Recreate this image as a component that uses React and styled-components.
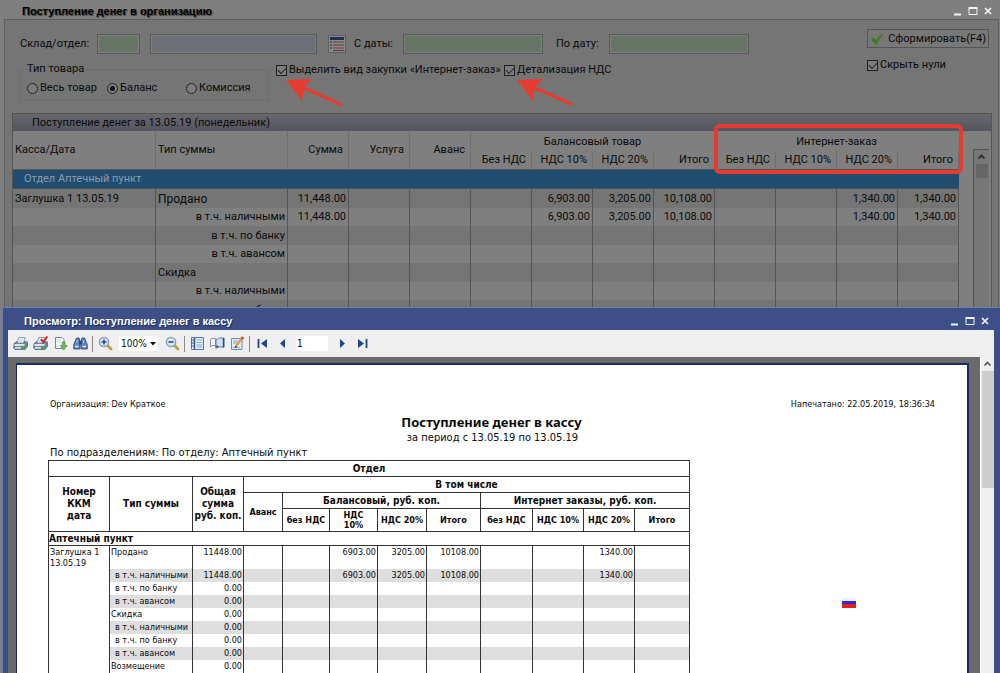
import React from "react";
import styled, { createGlobalStyle, css } from "styled-components";

const Global = createGlobalStyle`
  * { box-sizing: border-box; }
  html, body, #root { height: 100%; }
  body { margin: 0; background: #7f7f7f; font: 11px/14px "DejaVu Sans Condensed", "Noto Sans", sans-serif; color: #0a0a0a; }
  input, button, select { font: inherit; color: inherit; }
`;

const Desktop = styled.main`
  display: flex;
  flex-direction: column;
  height: 100vh;
  overflow: hidden;
`;

/* ---------- main form window ---------- */

const FormWindow = styled.section`
  display: flex;
  flex-direction: column;
  flex: 0 0 307px;
  min-height: 0;
  overflow: hidden;
  background: #7f7f7f;
  font-family: Roboto, "Noto Sans", sans-serif;
`;

const TitleBar = styled.header`
  display: flex;
  align-items: center;
  justify-content: space-between;
  flex: none;
  height: ${(p) => (p.$front ? 22 : 19)}px;
  padding: ${(p) => (p.$front ? "4px 3px 0 16px" : "3px 6px 0 22px")};
  color: ${(p) => (p.$front ? "#fff" : "#000")};
`;

const WindowTitle = styled.h1`
  margin: 0;
  font: bold 11px/14px "Liberation Sans", Arial, sans-serif;
  text-shadow: 1px 1px 1px ${(p) => (p.$front ? "#1d2c5c" : "#3a3a3a")};
`;

const Controls = styled.div`
  display: flex;
  gap: 3px;
`;

const ControlButton = styled.button`
  display: flex;
  width: 12px;
  height: 12px;
  padding: 0;
  border: 0;
  background: none;
  color: #f4f4f4;
`;

const FormBody = styled.div`
  display: flex;
  flex-direction: column;
  flex: 1;
  min-height: 0;
  margin: 0 1px 0 4px;
  border: 1px solid #5e5e5e;
  border-bottom: 0;
  background: #757575;
`;

const FormArea = styled.form`
  display: flex;
  justify-content: space-between;
  flex: none;
  height: 93px;
  padding: 9px 9px 0 15px;
`;

const FormMain = styled.div`
  display: flex;
  flex-direction: column;
`;

const FieldRow = styled.div`
  display: flex;
  align-items: center;
  height: 20px;
  margin-top: 5px;
`;

const FieldLabel = styled.label`
  width: ${(p) => p.$w}px;
  white-space: nowrap;
`;

const Field = styled.input`
  width: ${(p) => p.$w}px;
  height: 20px;
  margin-right: ${(p) => p.$gap}px;
  padding: 0 3px;
  border: 1px solid #5a5c5a;
  outline: 1px solid #7e7e7e;
  outline-offset: -2px;
  border-radius: 0;
  background: ${(p) => (p.$plain ? "#6e7077" : "#667566")};
`;

const ListButton = styled.button`
  display: flex;
  width: 18px;
  height: 18px;
  margin-right: 8px;
  padding: 1px;
  border: 1px solid #5e5e5e;
  background: #8a8a8a;
`;

const OptionRow = styled.div`
  display: flex;
  gap: 7px;
`;

const GroupBox = styled.fieldset`
  display: flex;
  width: 249px;
  height: 39px;
  margin: 8px 0 0;
  padding: 5px 5px 0 6px;
  border: 1px solid #6d6d6d;
  legend { padding: 0 2px 0 0; }
`;

const Check = styled.label`
  position: relative;
  display: flex;
  align-items: center;
  gap: 2px;
  height: 14px;
  white-space: nowrap;
  width: ${(p) => (p.$w ? p.$w + "px" : "auto")};
`;

const Box = styled.input`
  appearance: none;
  flex: none;
  display: grid;
  place-items: center;
  width: 11px;
  height: 11px;
  margin: 0;
  border: 1px solid #222;
  border-radius: ${(p) => (p.type === "radio" ? "50%" : 0)};
  background: #7d7d7d;
  &:checked::after {
    content: "";
    ${(p) =>
      p.type === "radio"
        ? css`width: 5px; height: 5px; border-radius: 50%; background: #111;`
        : css`width: 7px; height: 4px; margin-top: -2px; border: solid #222; border-width: 0 0 1px 1px; transform: rotate(-45deg);`}
  }
`;

const CheckRow = styled.div`
  display: flex;
  gap: 9px;
  padding-top: 9px;
`;

const Arrow = styled.svg`
  position: absolute;
  z-index: 2;
  left: ${(p) => p.$left}px;
  top: 16px;
`;

const FormSide = styled.div`
  display: flex;
  flex-direction: column;
  gap: 10px;
  width: 122px;
`;

const SubmitButton = styled.button`
  display: flex;
  align-items: center;
  gap: 4px;
  height: 19px;
  padding: 0 2px;
  border: 1px solid #555;
  background: #787878;
  white-space: nowrap;
`;

const GridPanel = styled.section`
  display: flex;
  flex-direction: column;
  flex: 1;
  min-height: 0;
  overflow: hidden;
  margin: 0 6px 0 7px;
  border: 1px solid #555;
  border-bottom: 0;
  background: #7f7f7f;
`;

const GridTitle = styled.h2`
  flex: none;
  height: 17px;
  margin: 0;
  padding: 2px 19px;
  font: inherit;
  background: linear-gradient(#67676c, #55555f);
`;

const GridBody = styled.div`
  display: flex;
  flex: 1;
  min-height: 0;
`;

const GridTable = styled.table`
  flex: 1;
  align-self: flex-start;
  width: 0;
  table-layout: fixed;
  border-collapse: separate;
  border-spacing: 0;
  th { padding: 0; font-weight: normal; }
`;

const HeadCell = styled.th`
  position: relative;
  height: ${(p) => (p.$group ? 20 : 19)}px;
  && { padding: ${(p) => (p.$group ? "2px 0 0" : "0 5px 0 2px")}; }
  text-align: ${(p) => p.$align || "right"};
  border-right: 1px solid ${(p) => (p.$group ? "transparent" : "#6e6e6e")};
  border-bottom: ${(p) => (p.$group ? 0 : "1px solid #555")};
`;

const Highlight = styled.span`
  position: absolute;
  z-index: 3;
  top: -7px;
  left: -1px;
  right: -5px;
  height: 50px;
  border: 4px solid #e63c30;
  border-radius: 6px;
`;

const BandCell = styled.td`
  height: 19px;
  padding: 0 11px;
  background: #204c70;
  color: #8b9dac;
  border-bottom: 1px solid #4c5358;
`;

const GridRow = styled.tr`
  height: 18px;
  &:nth-child(even) { height: 19px; background: #757575; }
`;

const GridCell = styled.td`
  padding: 0 2px;
  line-height: 14px;
  font-size: ${(p) => (p.$big ? 12 : 11)}px;
  text-align: ${(p) => p.$align || "right"};
  border-right: 1px solid #555;
  white-space: nowrap;
`;

const ScrollTrack = styled.div`
  flex: none;
  display: flex;
  flex-direction: column;
  align-items: center;
  gap: 2px;
  width: ${(p) => (p.$front ? 14 : 16)}px;
  margin: ${(p) => (p.$front ? 0 : "18px 2px 0 14px")};
  border-left: 1px solid ${(p) => (p.$front ? "#fff" : "#505050")};
  border-top: ${(p) => (p.$front ? 0 : "1px solid #505050")};
  background: ${(p) => (p.$front ? "#efefef" : "#777")};
`;

const ScrollArrow = styled.button`
  display: grid;
  place-items: center;
  width: 100%;
  height: 12px;
  padding: 2px 0 0;
  border: 0;
  background: none;
  color: ${(p) => (p.$front ? "#555" : "#222")};
`;

const Thumb = styled.div`
  width: 12px;
  height: ${(p) => p.$h}px;
  background: ${(p) => (p.$front ? "#cdcdcd" : "#666")};
`;

/* ---------- print preview window ---------- */

const PreviewWindow = styled.section`
  display: flex;
  flex-direction: column;
  flex: 1;
  min-height: 0;
  margin-left: 2px;
  padding: 0 6px 0 5px;
  border: 1px solid #6a7cb0;
  border-width: 1px 0 0 1px;
  background: #3c4f87;
`;

const Toolbar = styled.div`
  display: flex;
  align-items: center;
  flex: none;
  height: 27px;
  padding-left: 2px;
  background: #efefef;
`;

const ToolButton = styled.button`
  display: grid;
  place-items: center;
  width: 20px;
  height: 20px;
  padding: 0;
  border: 0;
  background: none;
`;

const Separator = styled.span`
  width: 1px;
  height: 16px;
  margin: 0 2px;
  background: #8a8a8a;
`;

const ZoomBox = styled.label`
  position: relative;
  display: flex;
  align-items: center;
  width: 39px;
  height: 15px;
  margin: 0 4px;
  background: #fff;
  svg { position: absolute; right: 2px; top: 6px; pointer-events: none; }
`;

const ZoomSelect = styled.select`
  appearance: none;
  width: 100%;
  height: 15px;
  padding: 0 0 0 2px;
  border: 0;
  background: none;
  font-size: 10px;
  line-height: 15px;
`;

const PageInput = styled.input`
  width: 32px;
  height: 15px;
  margin: 0 4px;
  padding: 0 1px;
  border: 0;
  background: #fff;
  font-size: 10px;
`;

const Viewer = styled.div`
  display: flex;
  flex: 1;
  min-height: 0;
`;

const Canvas = styled.div`
  flex: 1;
  min-width: 0;
  overflow: hidden;
  padding: 6px 11px 0 8px;
  background: #6a6a6a;
`;

const Page = styled.article`
  height: 100%;
  padding: 32px 32px 0 31px;
  border: 2px solid #152c66;
  border-left-width: 1px;
  border-bottom: 0;
  background: #fff;
  overflow: hidden;
`;

const PageHead = styled.div`
  display: flex;
  justify-content: space-between;
  padding-left: 2px;
  font-size: 9px;
  line-height: 14px;
`;

const ReportTitle = styled.h2`
  margin: 3px 0 0;
  text-align: center;
  font-family: "Noto Sans", sans-serif;
  font-size: 13px;
  line-height: 16px;
`;

const ReportLine = styled.p`
  margin: 0;
  padding-left: 2px;
  font-size: 11px;
  line-height: ${(p) => (p.$center ? 16 : 14)}px;
  text-align: ${(p) => (p.$center ? "center" : "left")};
`;

const ReportArea = styled.div`
  display: flex;
  justify-content: space-between;
`;

const ReportTable = styled.table`
  width: 641px;
  table-layout: fixed;
  border-collapse: collapse;
  font-size: 9px;
  line-height: 11px;
`;

const ReportHead = styled.th`
  height: ${(p) => p.$h || 16}px;
  padding: 0;
  border: 1px solid #333;
  font-size: ${(p) => (p.$small ? 9 : 10)}px;
  line-height: ${(p) => (p.$small ? 10 : 12)}px;
  text-align: ${(p) => p.$align || "center"};
`;

const ReportCell = styled.td`
  height: ${(p) => (p.$tall ? 23 : 13)}px;
  padding: 1px 1px 0 ${(p) => (p.$indent ? 5 : 1)}px;
  vertical-align: top;
  border: solid #333;
  border-width: 0 1px;
  text-align: ${(p) => p.$align || "right"};
  white-space: nowrap;
  background: ${(p) => (p.$shade ? "#dedede" : "#fff")};
`;

const Flag = styled.svg`
  flex: none;
  margin: 138px 79px 0 0;
`;

/* ---------- drawings ---------- */

const MinIcon = () => <svg width="12" height="12"><path d="M2 9.500h7" stroke="currentColor" strokeWidth="2" /></svg>;
const MaxIcon = () => <svg width="12" height="12"><path d="M2 3.500h8v6h-8z" fill="none" stroke="currentColor" /><path d="M1.500 3h9" stroke="currentColor" strokeWidth="2" /></svg>;
const CloseIcon = () => <svg width="12" height="12"><path d="M3 3l6 6M9 3l-6 6" stroke="currentColor" strokeWidth="1.700" /></svg>;
const UpIcon = () => <svg width="9" height="6"><path d="M1.500 4.500l3-3 3 3" fill="none" stroke="currentColor" strokeWidth="1.600" /></svg>;

const WindowControls = () => (
  <Controls>
    <ControlButton aria-label="Свернуть"><MinIcon /></ControlButton>
    <ControlButton aria-label="Развернуть"><MaxIcon /></ControlButton>
    <ControlButton aria-label="Закрыть"><CloseIcon /></ControlButton>
  </Controls>
);

const RedArrow = ({ left }) => (
  <Arrow $left={left} width="60" height="30" viewBox="0 0 60 30">
    <path d="M16 8L54 25" stroke="#e63c30" strokeWidth="3.200" strokeLinecap="round" />
    <path d="M0 1l26-1-8 8-2 14z" fill="#e63c30" />
  </Arrow>
);

const Svg = ({ children }) => <svg width="15" height="15" viewBox="0 0 15 15" fill="none">{children}</svg>;

const printer = (
  <>
    <path d="M1 7.500L4 5.500h8.500L14.500 6v4.500L12 13.500H2L.8 12z" fill="#6f859b" stroke="#526a83" strokeWidth=".8" />
    <path d="M4 7l1.800-5.500h6.400L10.500 7z" fill="#f4f8fb" stroke="#6d86a3" strokeWidth=".8" />
    <path d="M6.300 3.500h4M5.700 5.200h4" stroke="#b4c8de" strokeWidth=".8" />
    <path d="M1.500 8h10v2h-10z" fill="#dce6ee" />
    <path d="M2 11.200h6v1.400H2z" fill="#eef3f7" />
    <path d="M8.500 9.800h3.200v2.500H8.500z" fill="#35b53c" />
  </>
);

const Lens = ({ plus }) => (
  <Svg>
    <path d="M9 9l4 4" stroke="#c9973f" strokeWidth="2.800" strokeLinecap="round" />
    <circle cx="6" cy="6" r="4.600" fill="#d9e8f8" stroke="#8c9fba" strokeWidth="1.500" />
    <path d={plus ? "M3.500 6h5M6 3.500v5" : "M3.500 6h5"} stroke="#27498a" strokeWidth="1.600" />
  </Svg>
);

const icons = {
  print: <Svg>{printer}</Svg>,
  printSetup: <Svg>{printer}<path d="M8 3.200l2.300 2.800L14.300 .5" stroke="#d9262b" strokeWidth="2" /></Svg>,
  exportDoc: (
    <Svg>
      <path d="M2.500 1.500h6.500l2 2v9h-8.500z" fill="#f5f9fd" stroke="#6f86a6" />
      <path d="M4.500 4h3M4.500 6h4" stroke="#c5d3e3" />
      <path d="M9.500 6h2.500v3.500h2.300l-3.600 4.500-3.500-4.500h2.300z" fill="#7cb55b" stroke="#4e8b34" strokeWidth=".7" />
    </Svg>
  ),
  find: (
    <Svg>
      <path d="M3.500 2h2.500l1 3v8H.8V8.500zM9 2h2.500l2.700 6.500V13H8V5z" fill="#5f86c0" stroke="#2a4a82" strokeWidth=".9" />
      <path d="M6 5h3v3.500H6z" fill="#2a4a82" />
      <path d="M2 10.500h3.500M9.500 10.500h3.500" stroke="#dce9f8" strokeWidth="1.500" />
      <path d="M4 4v3M10.500 4v3" stroke="#a9c4e8" />
    </Svg>
  ),
  outline: (
    <Svg>
      <path d="M1.500 1.500h12v12h-12z" fill="#e6f0fb" stroke="#5579ad" />
      <path d="M4.500 2v11.500" stroke="#34578f" strokeWidth="1.500" />
      <path d="M6.500 4h6M6.500 6.500h6M6.500 9h6M6.500 11h6" stroke="#8aa7cf" />
      <path d="M1 4h3M1 7h3M1 10h3" stroke="#34578f" />
    </Svg>
  ),
  thumbs: (
    <Svg>
      <path d="M1.500 2.500h4v7h-4l-1 1.500v-7z" fill="#f7f9fc" stroke="#8494ab" />
      <path d="M6 3.500q2 0 3-1.500h5v9H9.500q-1.500 0-3.500 1.500z" fill="#cfe0f3" stroke="#657fa5" />
      <path d="M13.500 2v9.500" stroke="#354d75" strokeWidth="1.500" />
      <path d="M5.500 10.500h3" stroke="#354d75" strokeWidth="1.500" />
    </Svg>
  ),
  edit: (
    <Svg>
      <path d="M1.500 2.500h10.500v11h-10.500z" fill="#dfeaf7" stroke="#7189ab" />
      <path d="M3 5h5M3 7h4M3 11.500h7" stroke="#8fa8c8" />
      <path d="M6 10l6-7.500" stroke="#e0a23d" strokeWidth="2.600" />
      <path d="M11.700 3l1.500-2" stroke="#cc4a45" strokeWidth="2.800" />
      <path d="M4.800 12l.5-2.500 2 1.500z" fill="#333" />
    </Svg>
  ),
  first: <Svg><path d="M3.500 3v9" stroke="#1f4788" strokeWidth="1.800" /><path d="M12 3v9L6 7.500z" fill="#1f4788" /></Svg>,
  prev: <Svg><path d="M10 3v9L5 7.500z" fill="#1f4788" /></Svg>,
  next: <Svg><path d="M5 3v9l5-4.500z" fill="#1f4788" /></Svg>,
  last: <Svg><path d="M11.500 3v9" stroke="#1f4788" strokeWidth="1.800" /><path d="M3 3v9l6-4.500z" fill="#1f4788" /></Svg>,
};

const Tool = ({ icon, label }) => <ToolButton type="button" aria-label={label}>{icon}</ToolButton>;

/* ---------- data ---------- */

const gridCols = [143, 132, 61, 61, 61, 61, 61, 61, 61, 61, 61, 61, 61];
const vatHeads = ["Без НДС", "НДС 10%", "НДС 20%", "Итого"];
const sold = ["11,448.00", "", "", "", "6,903.00", "3,205.00", "10,108.00", "", "", "1,340.00", "1,340.00"];
const none = Array(11).fill("");
const gridRows = [
  { place: "Заглушка 1 13.05.19", type: "Продано", big: true, main: true, values: sold },
  { type: "в т.ч. наличными", values: sold },
  { type: "в т.ч. по банку", values: none },
  { type: "в т.ч. авансом", values: none },
  { type: "Скидка", main: true, values: none },
  { type: "в т.ч. наличными", values: none },
  { type: "в т.ч. по банку", values: none },
];

const reportCols = [61, 83, 51, 39, 47, 48, 49, 54, 52, 51, 51, 55];
const reportHeads = ["без НДС", <>НДС<br />10%</>, "НДС 20%", "Итого", "без НДС", "НДС 10%", "НДС 20%", "Итого"];
const paid = ["11448.00", "", "", "6903.00", "3205.00", "10108.00", "", "", "1340.00", ""];
const zero = ["0.00", "", "", "", "", "", "", "", "", ""];
const reportRows = [
  ["Продано", paid],
  ["в т.ч. наличными", paid],
  ["в т.ч. по банку", zero],
  ["в т.ч. авансом", zero],
  ["Скидка", zero],
  ["в т.ч. наличными", zero],
  ["в т.ч. по банку", zero],
  ["в т.ч. авансом", zero],
  ["Возмещение", zero],
];

const Columns = ({ widths }) => (
  <colgroup>{widths.map((w, i) => <col key={i} width={w} />)}</colgroup>
);

function IncomeGrid() {
  return (
    <GridTable>
      <Columns widths={gridCols} />
      <thead>
        <tr>
          <HeadCell rowSpan={2} $align="left">Касса/Дата</HeadCell>
          <HeadCell rowSpan={2} $align="left">Тип суммы</HeadCell>
          <HeadCell rowSpan={2}>Сумма</HeadCell>
          <HeadCell rowSpan={2}>Услуга</HeadCell>
          <HeadCell rowSpan={2}>Аванс</HeadCell>
          <HeadCell colSpan={4} $group $align="center">Балансовый товар</HeadCell>
          <HeadCell colSpan={4} $group $align="center">Интернет-заказ<Highlight /></HeadCell>
        </tr>
        <tr>{[...vatHeads, ...vatHeads].map((h, i) => <HeadCell key={i}>{h}</HeadCell>)}</tr>
      </thead>
      <tbody>
        <tr><BandCell colSpan={13}>Отдел Аптечный пункт</BandCell></tr>
        {gridRows.map((r, i) => (
          <GridRow key={i}>
            <GridCell $align="left">{r.place}</GridCell>
            <GridCell $align={r.main ? "left" : "right"} $big={r.big}>{r.type}</GridCell>
            {r.values.map((v, j) => <GridCell key={j}>{v}</GridCell>)}
          </GridRow>
        ))}
      </tbody>
    </GridTable>
  );
}

function Report() {
  return (
    <ReportTable>
      <Columns widths={reportCols} />
      <thead>
        <tr><ReportHead colSpan={12}>Отдел</ReportHead></tr>
        <tr>
          <ReportHead rowSpan={3}>Номер<br />ККМ<br />дата</ReportHead>
          <ReportHead rowSpan={3}>Тип суммы</ReportHead>
          <ReportHead rowSpan={3}>Общая сумма<br />руб. коп.</ReportHead>
          <ReportHead colSpan={9}>В том числе</ReportHead>
        </tr>
        <tr>
          <ReportHead rowSpan={2} $small>Аванс</ReportHead>
          <ReportHead colSpan={4}>Балансовый, руб. коп.</ReportHead>
          <ReportHead colSpan={4}>Интернет заказы, руб. коп.</ReportHead>
        </tr>
        <tr>{reportHeads.map((h, i) => <ReportHead key={i} $small $h={23}>{h}</ReportHead>)}</tr>
        <tr><ReportHead colSpan={12} $h={14} $align="left">Аптечный пункт</ReportHead></tr>
      </thead>
      <tbody>
        {reportRows.map(([type, values], i) => (
          <tr key={i}>
            {i === 0 && <ReportCell rowSpan={reportRows.length} $align="left">Заглушка 1<br />13.05.19</ReportCell>}
            <ReportCell $align="left" $tall={i === 0} $indent={type.startsWith("в ")} $shade={i % 2 === 1}>{type}</ReportCell>
            {values.map((v, j) => <ReportCell key={j} $shade={i % 2 === 1}>{v}</ReportCell>)}
          </tr>
        ))}
      </tbody>
    </ReportTable>
  );
}

export default function App() {
  return (
    <Desktop>
      <Global />
      <FormWindow>
        <TitleBar>
          <WindowTitle>Поступление денег в организацию</WindowTitle>
          <WindowControls />
        </TitleBar>
        <FormBody>
          <FormArea>
            <FormMain>
              <FieldRow>
                <FieldLabel $w={77} htmlFor="dept">Склад/отдел:</FieldLabel>
                <Field id="dept" $w={43} $gap={10} />
                <Field aria-label="Название отдела" $plain $w={167} $gap={11} />
                <ListButton type="button" aria-label="Выбрать из списка">
                  <svg width="14" height="14">
                    <path d="M0 0h14v3H0z" fill="#1f2f55" />
                    <path d="M0 5h2M0 8h2M0 11h2" stroke="#222" />
                    <path d="M3 5h11M3 11h11" stroke="#8c2b2b" />
                    <path d="M3 8h11M3 13.500h11" stroke="#444" />
                  </svg>
                </ListButton>
                <FieldLabel $w={49} htmlFor="from">С даты:</FieldLabel>
                <Field id="from" $w={140} $gap={13} />
                <FieldLabel $w={53} htmlFor="to">По дату:</FieldLabel>
                <Field id="to" $w={140} $gap={0} />
              </FieldRow>
              <OptionRow>
                <GroupBox>
                  <legend>Тип товара</legend>
                  <Check $w={80}><Box type="radio" name="kind" />Весь товар</Check>
                  <Check $w={79}><Box type="radio" name="kind" defaultChecked />Баланс</Check>
                  <Check><Box type="radio" name="kind" />Комиссия</Check>
                </GroupBox>
                <CheckRow>
                  <Check $w={219}><Box type="checkbox" defaultChecked />Выделить вид закупки «Интернет-заказ»<RedArrow left={10} /></Check>
                  <Check><Box type="checkbox" defaultChecked />Детализация НДС<RedArrow left={13} /></Check>
                </CheckRow>
              </OptionRow>
            </FormMain>
            <FormSide>
              <SubmitButton type="button">
                <svg width="16" height="14" viewBox="0 0 16 14"><path d="M1 7l3-2 3 3q3-5 7-7l1 1q-4 4-7 11H6z" fill="#3f7a1f" /></svg>
                Сформировать(F4)
              </SubmitButton>
              <Check><Box type="checkbox" defaultChecked />Скрыть нули</Check>
            </FormSide>
          </FormArea>
          <GridPanel>
            <GridTitle>Поступление денег за 13.05.19 (понедельник)</GridTitle>
            <GridBody>
              <IncomeGrid />
              <ScrollTrack>
                <ScrollArrow aria-label="Вверх"><UpIcon /></ScrollArrow>
                <Thumb $h={14} />
              </ScrollTrack>
            </GridBody>
          </GridPanel>
        </FormBody>
      </FormWindow>

      <PreviewWindow>
        <TitleBar $front>
          <WindowTitle $front>Просмотр: Поступление денег в кассу</WindowTitle>
          <WindowControls />
        </TitleBar>
        <Toolbar>
          <Tool icon={icons.print} label="Печать" />
          <Tool icon={icons.printSetup} label="Настройка печати" />
          <Tool icon={icons.exportDoc} label="Экспорт" />
          <Tool icon={icons.find} label="Найти" />
          <Separator />
          <Tool icon={<Lens plus />} label="Увеличить" />
          <ZoomBox>
            <ZoomSelect aria-label="Масштаб"><option>100%</option></ZoomSelect>
            <svg width="6" height="4"><path d="M0 0h6L3 3.500z" fill="#111" /></svg>
          </ZoomBox>
          <Tool icon={<Lens />} label="Уменьшить" />
          <Separator />
          <Tool icon={icons.outline} label="Структура" />
          <Tool icon={icons.thumbs} label="Эскизы" />
          <Tool icon={icons.edit} label="Правка" />
          <Separator />
          <Tool icon={icons.first} label="Первая страница" />
          <Tool icon={icons.prev} label="Предыдущая страница" />
          <PageInput aria-label="Номер страницы" defaultValue="1" />
          <Tool icon={icons.next} label="Следующая страница" />
          <Tool icon={icons.last} label="Последняя страница" />
        </Toolbar>
        <Viewer>
          <Canvas>
            <Page>
              <PageHead>
                <span>Организация: Dev Краткое</span>
                <span>Напечатано: 22.05.2019, 18:36:34</span>
              </PageHead>
              <ReportTitle>Поступление денег в кассу</ReportTitle>
              <ReportLine $center>за период с 13.05.19 по 13.05.19</ReportLine>
              <ReportLine>По подразделениям: По отделу: Аптечный пункт</ReportLine>
              <ReportArea>
                <Report />
                <Flag width="14" height="10">
                  <path d="M0 0h14v3H0z" fill="#f0f0f2" />
                  <path d="M0 3h14v3H0z" fill="#2a2ae0" />
                  <path d="M0 6h14v4H0z" fill="#e8201c" />
                </Flag>
              </ReportArea>
            </Page>
          </Canvas>
          <ScrollTrack $front>
            <ScrollArrow $front aria-label="Вверх"><UpIcon /></ScrollArrow>
            <Thumb $front $h={117} />
          </ScrollTrack>
        </Viewer>
      </PreviewWindow>
    </Desktop>
  );
}
